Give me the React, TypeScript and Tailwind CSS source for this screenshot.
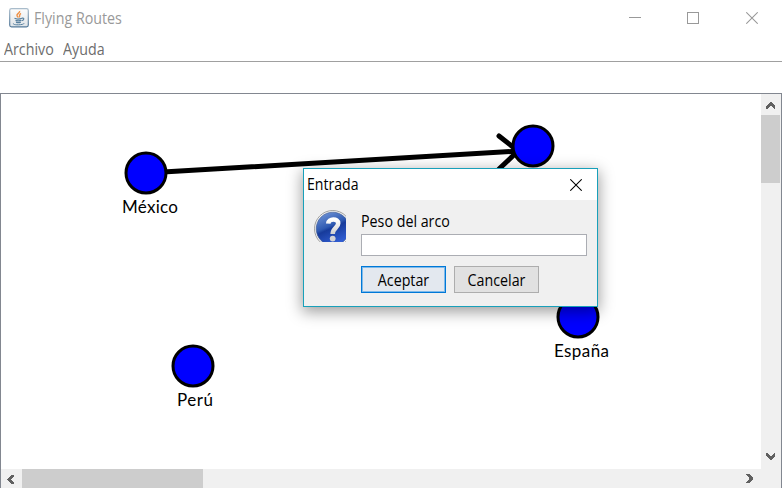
import type { ReactNode } from "react";

const cities = [
  { name: "México", x: 146, y: 173, labelX: 122, labelY: 213, width: 56 },
  { name: "", x: 533, y: 146, labelX: 0, labelY: 0, width: 0 },
  { name: "España", x: 578, y: 317, labelX: 554, labelY: 357, width: 55 },
  { name: "Perú", x: 193, y: 366, labelX: 177, labelY: 406, width: 36 },
];

function Chevron({ className }: { className: string }) {
  return (
    <svg width="10" height="8" viewBox="0 0 10 8" className={className} shapeRendering="crispEdges">
      <path d="M0 5 L4 1 H5 L9 5 V8 H8 L5 5 H4 L1 8 H0Z" fill="#606060" />
    </svg>
  );
}

function JavaIcon() {
  return (
    <svg width="20" height="20" viewBox="0 0 20 20">
      <defs>
        <linearGradient id="javaBg" x1="0" y1="0" x2="0" y2="1">
          <stop offset="0" stopColor="#fdfdfd" />
          <stop offset="1" stopColor="#dfe4e8" />
        </linearGradient>
        <linearGradient id="javaEdge" x1="0" y1="0" x2="0" y2="1">
          <stop offset="0" stopColor="#a9bccb" />
          <stop offset="1" stopColor="#527899" />
        </linearGradient>
      </defs>
      <rect x="0.7" y="0.7" width="18.6" height="18.1" rx="1.8" fill="url(#javaBg)" stroke="url(#javaEdge)" strokeWidth="1.2" />
      <path d="M10.6 3 C11.2 5 7.3 5.8 8 7.7 C8.3 8.5 9 8.8 9.2 9.6 M12 5.3 C9.6 6.5 11.3 7.8 10.2 9.3" fill="none" stroke="#ee9148" strokeWidth="1.4" />
      <path d="M5.5 10.3 C7 11 11 11 13 10.2 M6.5 12.4 C8 13 10.5 13 12.3 12.4 M7 14.2 C8.5 14.8 10.3 14.8 11.8 14.2 M13 10.2 C15.6 9.6 15.2 12.2 12.8 12.7" fill="none" stroke="#58809f" strokeWidth="1.2" />
      <path d="M4.8 15.4 C3 16.4 7 16.9 9.5 16.8 C13 16.7 15.5 16 14.8 15.2" fill="none" stroke="#58809f" strokeWidth="1" />
    </svg>
  );
}

function QuestionIcon() {
  return (
    <svg width="32" height="32" viewBox="0 0 32 32" className="shrink-0">
      <defs>
        <linearGradient id="qBall" x1="0.2" y1="0" x2="0.65" y2="1">
          <stop offset="0" stopColor="#6f93d6" />
          <stop offset="0.42" stopColor="#2f5ab2" />
          <stop offset="0.5" stopColor="#173b9b" />
          <stop offset="1" stopColor="#3563dc" />
        </linearGradient>
        <linearGradient id="qMark" x1="0" y1="0" x2="0" y2="1">
          <stop offset="0" stopColor="#ffffff" />
          <stop offset="1" stopColor="#d0d0d0" />
        </linearGradient>
      </defs>
      <circle cx="18.8" cy="18.8" r="18.3" fill="#f4f4f4" stroke="#969696" strokeWidth="0.9" />
      <circle cx="18.8" cy="18.8" r="16.6" fill="url(#qBall)" stroke="#3b578f" strokeWidth="0.6" />
      <path d="M14.2 13.6 C14.4 8.2 24.2 8 24.2 13.4 C24.2 17.6 18.8 17.8 18.7 24" fill="none" stroke="url(#qMark)" strokeWidth="4.6" />
      <circle cx="18.7" cy="28.6" r="2.9" fill="#d2d2d6" />
    </svg>
  );
}

function Cross({ color, size }: { color: string; size: number }) {
  return (
    <svg width={size} height={size} viewBox="0 0 12 12">
      <path d="M0.3 0.3 L11.7 11.7 M11.7 0.3 L0.3 11.7" stroke={color} strokeWidth="1.05" />
    </svg>
  );
}

function TitleBar() {
  return (
    <header className="flex h-[38px] shrink-0 items-start text-[#999999]">
      <div className="ml-[9px] mt-2">
        <JavaIcon />
      </div>
      <span className="ml-[5px] mt-1.5 origin-left scale-x-[0.92] whitespace-nowrap text-[15.5px] leading-6">Flying Routes</span>
      <div className="ml-auto mr-6 mt-3 flex h-3">
        <div className="mr-[46px] mt-[5px] h-px w-3 bg-[#999999]" />
        <div className="mr-[47px] size-3 border border-[#999999]" />
        <Cross color="#999999" size={12} />
      </div>
    </header>
  );
}

function RouteCanvas() {
  return (
    <svg width="760" height="375" viewBox="1 94 760 375" className="block shrink-0 bg-white">
      <g stroke="#000" strokeWidth="5" strokeLinecap="round">
        <path d="M146 173 L520 151" />
        <path d="M499 136 L518 151 L499 169" fill="none" />
      </g>
      {cities.map((c) => (
        <g key={c.x}>
          <circle cx={c.x} cy={c.y} r="20" fill="#0000ff" stroke="#000" strokeWidth="3" />
          {c.name && (
            <text x={c.labelX} y={c.labelY} textLength={c.width} className="font-['Lato',sans-serif] text-[17px]">
              {c.name}
            </text>
          )}
        </g>
      ))}
    </svg>
  );
}

function DialogButton({ children, primary }: { children: ReactNode; primary?: boolean }) {
  return (
    <button
      className={
        primary
          ? "h-[27px] w-[85px] border border-[#0078d7] bg-[#e3e8ef] shadow-[inset_0_0_0_1px_#7fbaea]"
          : "h-[27px] w-[85px] border border-[#adadad] bg-[#e1e1e1]"
      }
    >
      <span className="block scale-x-[0.92] pt-px leading-6">{children}</span>
    </button>
  );
}

function WeightDialog() {
  return (
    <section className="absolute left-[303px] top-[168px] flex h-[139px] w-[295px] flex-col border border-[#18a0ba] bg-[#f0f0f0] text-[15.5px] text-black shadow-[0_4px_14px_1px_rgba(0,0,0,0.38)]">
      <header className="flex h-[31px] shrink-0 items-center justify-between bg-white pl-[3px] pr-[15px]">
        <span className="origin-left scale-x-[0.91]">Entrada</span>
        <Cross color="#000000" size={12} />
      </header>
      <div className="flex pl-2.5 pt-2.5">
        <QuestionIcon />
        <div className="ml-[15px] flex flex-col">
          <label className="h-6 origin-left scale-x-[0.92] leading-[22px]">Peso del arco</label>
          <input className="h-[22px] w-[226px] border border-[#abadb3] bg-white outline-none" />
          <div className="mt-2.5 flex gap-2">
            <DialogButton primary>Aceptar</DialogButton>
            <DialogButton>Cancelar</DialogButton>
          </div>
        </div>
      </div>
    </section>
  );
}

export default function App() {
  return (
    <div className="relative flex h-[488px] w-[782px] flex-col overflow-hidden bg-white font-['Open_Sans','Noto_Sans',sans-serif]">
      <TitleBar />
      <nav className="flex h-6 shrink-0 gap-[5px] border-b border-[#a0a0a0] pl-1 text-[15.5px] leading-[22px] text-[#6d6d6d]">
        <span className="origin-left scale-x-[0.92]">Archivo</span>
        <span className="origin-left scale-x-[0.92]">Ayuda</span>
      </nav>
      <main className="mt-[31px] flex h-[395px] shrink-0 flex-col border-x border-t border-[#828790] bg-[#f0f0f0]">
        <div className="flex">
          <RouteCanvas />
          <div className="flex w-5 flex-col">
            <div className="flex h-[21px] items-center pl-[5px]">
              <Chevron className="" />
            </div>
            <div className="h-[68px] w-[19px] bg-[#cdcdcd]" />
            <div className="mt-auto flex h-6 items-center pl-1">
              <Chevron className="rotate-180" />
            </div>
          </div>
        </div>
        <div className="flex h-[19px] items-center">
          <div className="flex w-[21px] pl-1">
            <Chevron className="-rotate-90" />
          </div>
          <div className="h-full w-[181px] bg-[#cdcdcd]" />
          <Chevron className="ml-auto mr-[26px] rotate-90" />
        </div>
      </main>
      <WeightDialog />
    </div>
  );
}
